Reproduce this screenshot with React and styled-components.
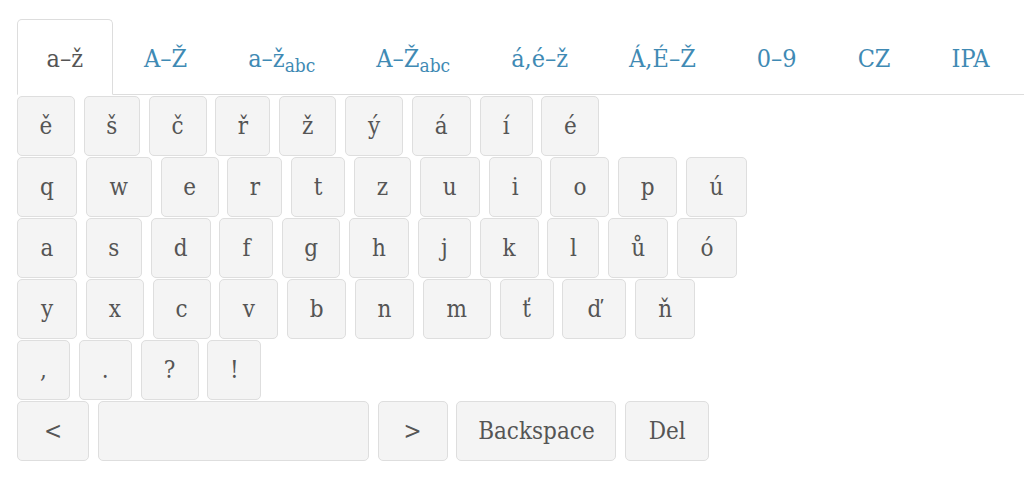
import React, { useState } from 'react';
import styled, { createGlobalStyle } from 'styled-components';

const GlobalStyle = createGlobalStyle`
  html, body {
    margin: 0;
    padding: 0;
    background: #fff;
  }
  body {
    font-family: "DejaVu Serif Condensed", "DejaVu Serif", "Liberation Serif", serif;
  }
`;

const Page = styled.div`
  padding: 19px 0 0 17px;
  font-family: "DejaVu Serif Condensed", "DejaVu Serif", "Liberation Serif", serif;
  font-stretch: condensed;
`;

const TabList = styled.ul`
  display: flex;
  list-style: none;
  margin: 0;
  padding: 0;
  border-bottom: 1px solid #dddddd;
`;

const Tab = styled.li`
  display: flex;
  align-items: center;
  box-sizing: border-box;
  height: 76px;
  padding: 2px 28.5px 0;
  margin: 0 2px -1px 0;
  border: 1px solid ${p => (p.$active ? '#dddddd' : 'transparent')};
  border-bottom-color: ${p => (p.$active ? '#ffffff' : 'transparent')};
  border-radius: 5px 5px 0 0;
  background: ${p => (p.$active ? '#ffffff' : 'transparent')};
  color: ${p => (p.$active ? '#555555' : '#3f8ab4')};
  font-size: 25px;
  white-space: nowrap;
  cursor: pointer;
`;

const Label = styled.span`
  line-height: 1;
`;

const Sub = styled.sub`
  font-size: 0.76em;
  vertical-align: -0.24em;
  line-height: 0;
`;

const Keyboard = styled.div`
  display: flex;
  flex-direction: column;
  gap: 1px;
  margin-top: 1px;
`;

const Row = styled.div`
  display: flex;
  gap: 8.8px;
`;

const Key = styled.button`
  box-sizing: border-box;
  width: ${p => p.$w}px;
  height: 60px;
  padding: 0;
  border: 1px solid #dedede;
  border-radius: 5px;
  background: #f4f4f4;
  color: #555555;
  font-family: inherit;
  font-stretch: condensed;
  font-size: 24px;
  line-height: 1;
  cursor: pointer;
`;

const tabs = [
  { label: 'a–ž' },
  { label: 'A–Ž' },
  { label: 'a–ž', sub: 'abc' },
  { label: 'A–Ž', sub: 'abc' },
  { label: 'á,é–ž' },
  { label: 'Á,É–Ž' },
  { label: '0–9' },
  { label: 'CZ' },
  { label: 'IPA' },
];

const rows = [
  [['ě', 58], ['š', 56], ['č', 58], ['ř', 55], ['ž', 57], ['ý', 58], ['á', 59], ['í', 53], ['é', 58]],
  [['q', 60], ['w', 66], ['e', 58], ['r', 55], ['t', 54], ['z', 57], ['u', 60], ['i', 53], ['o', 59], ['p', 59], ['ú', 61]],
  [['a', 60], ['s', 56], ['d', 60], ['f', 54], ['g', 58], ['h', 60], ['j', 53], ['k', 59], ['l', 52], ['ů', 60], ['ó', 60]],
  [['y', 60], ['x', 58], ['c', 58], ['v', 59], ['b', 59], ['n', 59], ['m', 68], ['ť', 54], ['ď', 64], ['ň', 60]],
  [[',', 53], ['.', 53], ['?', 58], ['!', 54]],
  [['<', 72], [' ', 271], ['>', 70], ['Backspace', 160], ['Del', 84]],
];

export default function App() {
  const [active, setActive] = useState(0);
  return (
    <Page>
      <GlobalStyle />
      <TabList>
        {tabs.map((t, i) => (
          <Tab key={i} $active={i === active} onClick={() => setActive(i)}>
            <Label>
              {t.label}
              {t.sub && <Sub>{t.sub}</Sub>}
            </Label>
          </Tab>
        ))}
      </TabList>
      <Keyboard>
        {rows.map((row, r) => (
          <Row key={r}>
            {row.map(([ch, w], k) => (
              <Key key={k} $w={w}>
                {ch}
              </Key>
            ))}
          </Row>
        ))}
      </Keyboard>
    </Page>
  );
}
